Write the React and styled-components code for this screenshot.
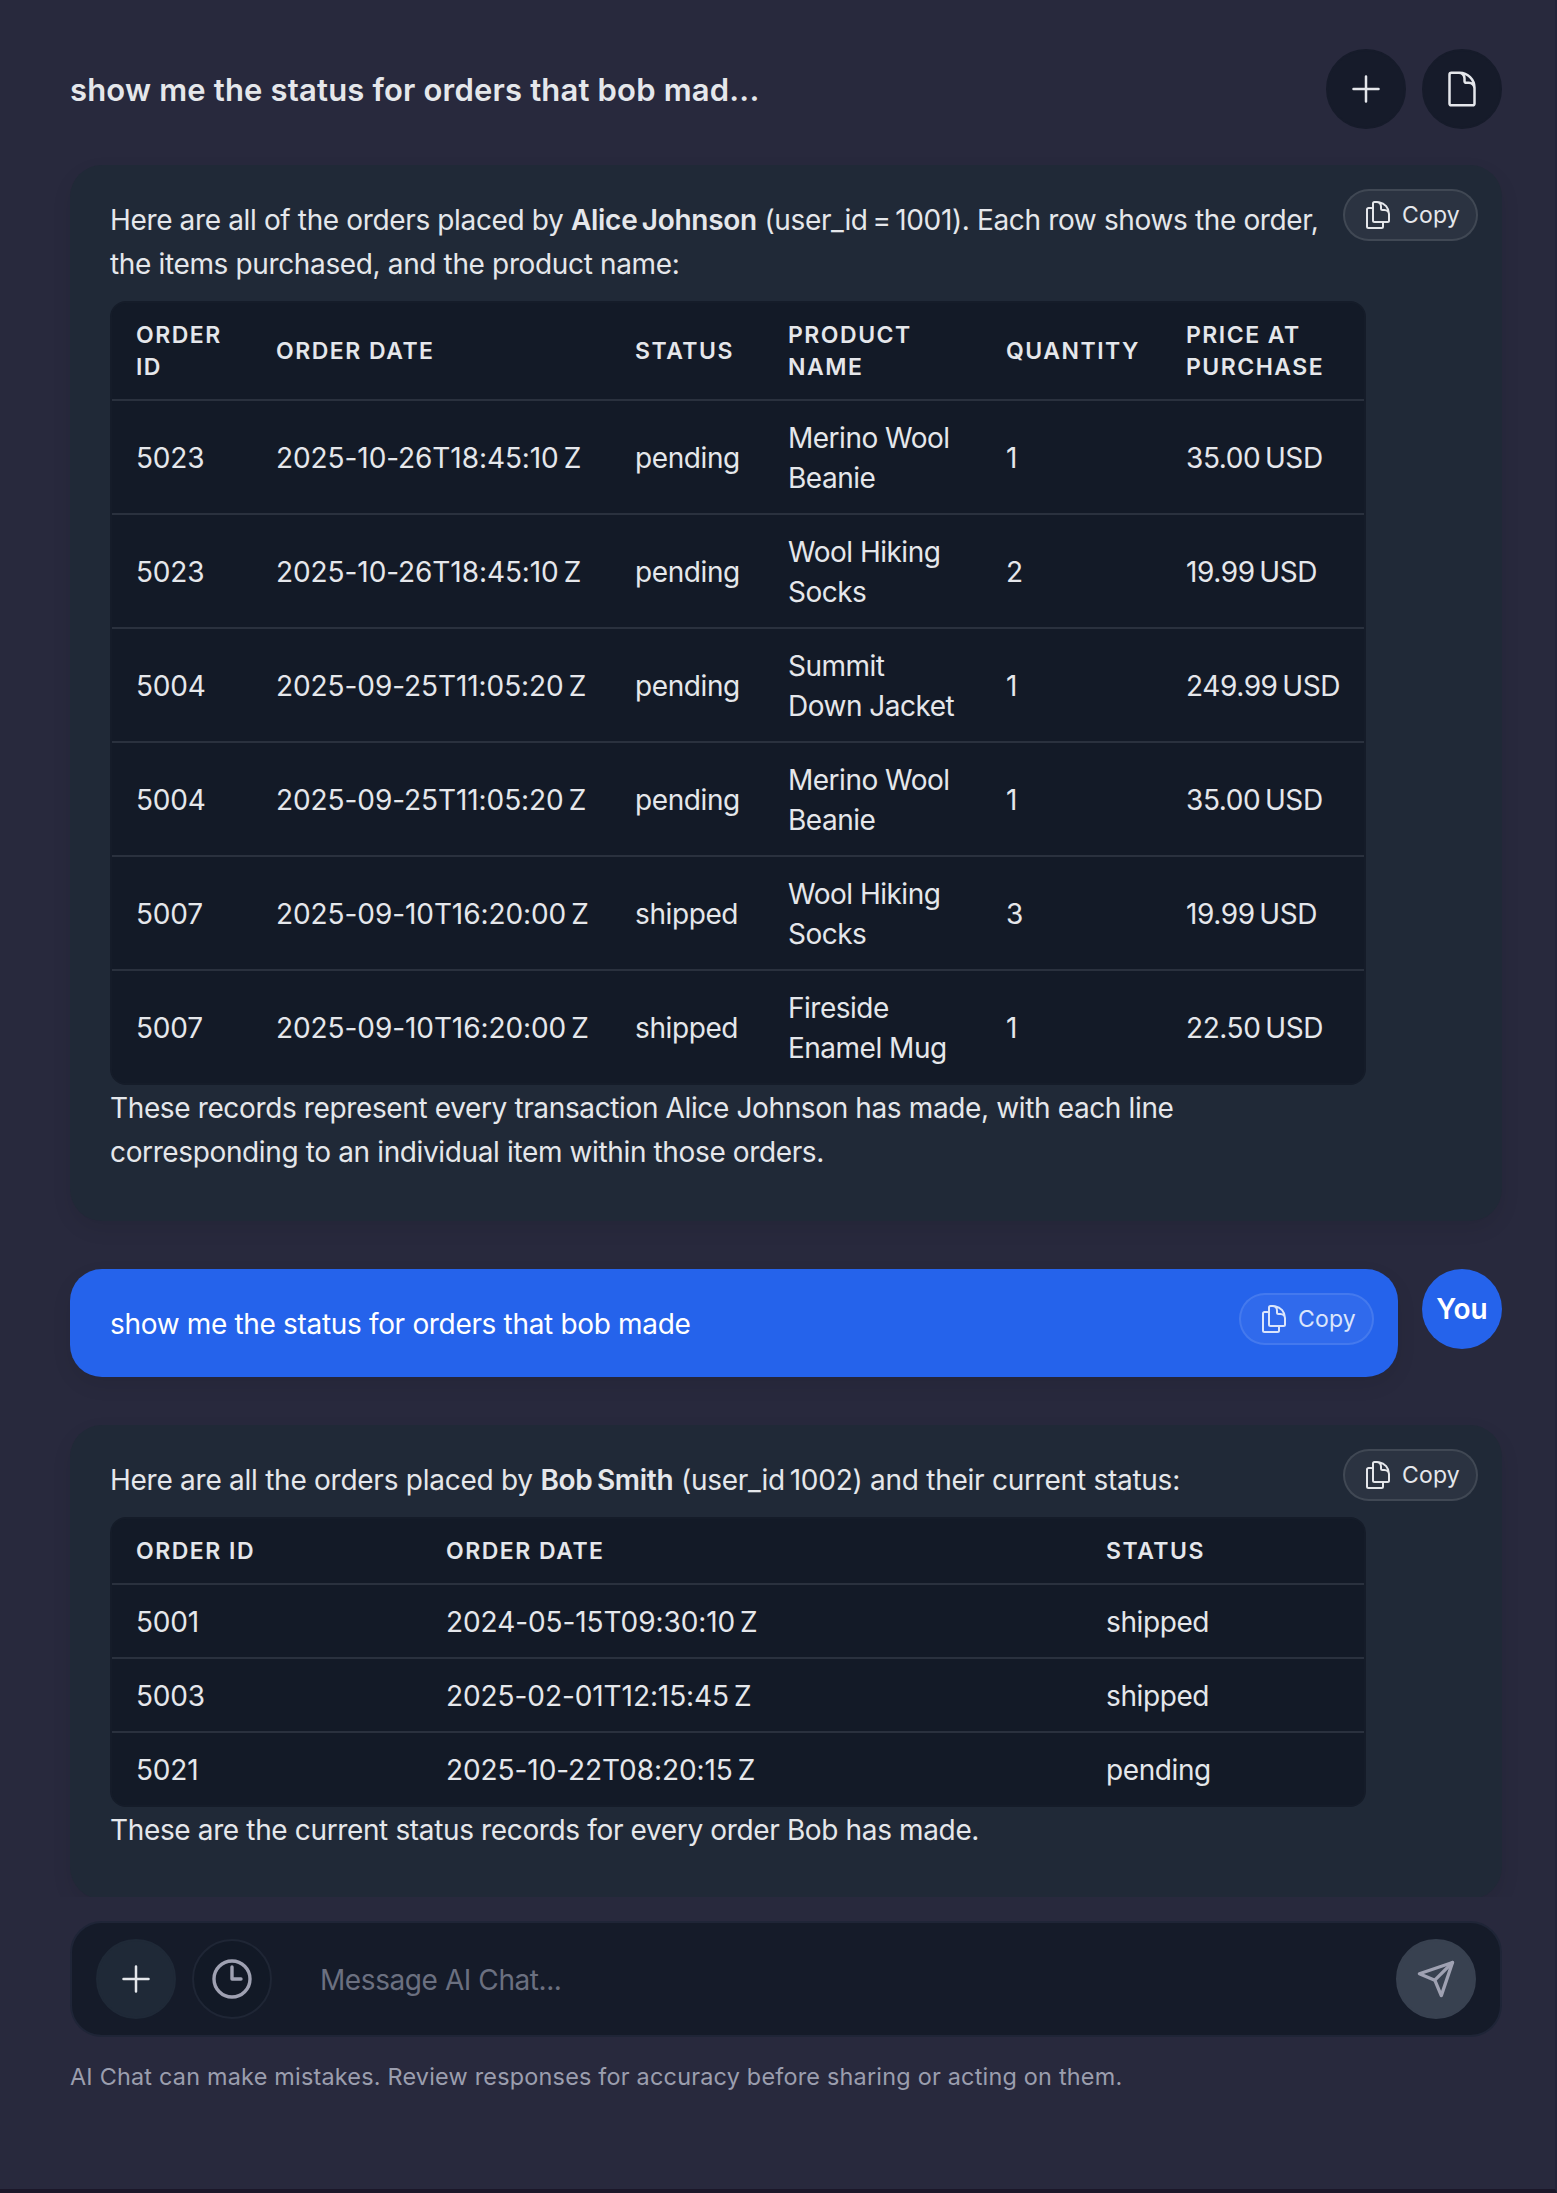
import styled, { createGlobalStyle } from 'styled-components';
import {
  HiOutlineClock,
  HiOutlineDocument,
  HiOutlineDocumentDuplicate,
  HiOutlinePlus,
} from 'react-icons/hi2';

const GlobalStyle = createGlobalStyle`
  * {
    box-sizing: border-box;
  }

  body {
    margin: 0;
    background-color: #28293d;
    color: #e5e7eb;
    font-family: Inter, 'Liberation Sans', sans-serif;
    font-size: 28px;
  }
`;

const Page = styled.div`
  display: flex;
  flex-direction: column;
  height: 2193px;
  padding: 49px 55px 0 70px;
  border-right: 2px solid #22243a;
  border-bottom: 4px solid #1b1729;
  overflow: hidden;
`;

const Header = styled.header`
  display: flex;
  align-items: center;
  justify-content: space-between;
  height: 80px;
  margin-right: -2px;
`;

const Title = styled.h1`
  margin: 0;
  font-size: 31px;
  font-weight: 600;
  letter-spacing: 0.18px;
`;

const HeaderActions = styled.div`
  display: flex;
  gap: 16px;
`;

const RoundButton = styled.button`
  display: flex;
  align-items: center;
  justify-content: center;
  flex-shrink: 0;
  width: 80px;
  height: 80px;
  padding: 0;
  border: 2px solid ${({ $border, $bg }) => $border || $bg};
  border-radius: 50%;
  background-color: ${({ $bg }) => $bg};
  color: ${({ $color }) => $color || '#e5e7eb'};
`;

const Messages = styled.main`
  display: flex;
  flex-direction: column;
  gap: 48px;
  height: 1768px;
  margin: 0 -55px 0 -70px;
  padding: 36px 55px 0 70px;
  overflow: hidden;
`;

const MessageRow = styled.div`
  display: flex;
  align-items: flex-start;
  gap: 24px;
  margin-right: -2px;
`;

const Bubble = styled.div`
  position: relative;
  flex: 1;
  padding: 33px 136px 31px 40px;
  border-radius: 32px;
  background-color: ${({ $user }) => ($user ? '#2563eb' : '#202937')};
  color: ${({ $user }) => ($user ? '#ffffff' : '#e5e7eb')};
  box-shadow: 0 8px 20px rgba(0, 0, 0, 0.08);
`;

const Text = styled.p`
  margin: 0;
  line-height: 44px;
  letter-spacing: ${({ $spacing }) => $spacing || -0.33}px;
  white-space: nowrap;

  strong {
    font-weight: 600;
    letter-spacing: -0.28px;
  }
`;

const CopyButton = styled.button`
  position: absolute;
  top: 24px;
  right: 24px;
  display: flex;
  align-items: center;
  gap: 8px;
  width: 135px;
  height: 52px;
  padding: 0 0 0 17px;
  border: 2px solid rgba(255, 255, 255, 0.1);
  border-radius: 26px;
  background-color: rgba(255, 255, 255, 0.05);
  color: ${({ $user }) => ($user ? '#dbe5fb' : '#e5e7eb')};
  font-family: inherit;
  font-size: 23px;
  letter-spacing: 0.2px;
`;

const TableWrap = styled.div`
  margin: 15px 0 17px;
  border: 2px solid #151c29;
  border-radius: 16px;
  background-color: #131a27;
  overflow: hidden;

  & + ${Text} {
    margin: -16px 0 16px;
  }
`;

const Table = styled.table`
  width: 100%;
  border-collapse: separate;
  border-spacing: 0;
  table-layout: fixed;
`;

const HeadCell = styled.th`
  width: ${({ $width }) => $width}px;
  padding: 16px 0 16px 24px;
  border-bottom: 2px solid #2a313e;
  font-size: 23px;
  font-weight: 600;
  line-height: 32px;
  letter-spacing: 1.5px;
  text-align: left;
  text-transform: uppercase;
  white-space: pre-line;
`;

const Cell = styled.td`
  padding: 17px 0 15px 24px;
  border-bottom: 2px solid #2a313e;
  line-height: 40px;
  letter-spacing: ${({ $spacing }) => $spacing || -0.4}px;
  white-space: pre-line;

  tr:last-child > & {
    border-bottom: none;
  }
`;

const Avatar = styled.div`
  display: flex;
  align-items: center;
  justify-content: center;
  width: 80px;
  height: 80px;
  border-radius: 50%;
  background-color: #2563eb;
  color: #ffffff;
  font-weight: 600;
`;

const Composer = styled.div`
  display: flex;
  align-items: center;
  gap: 16px;
  height: 116px;
  margin: 24px -2px 0 0;
  padding: 0 24px;
  border: 2px solid #1f2537;
  border-radius: 32px;
  background-color: #151b29;
`;

const Input = styled.input`
  flex: 1;
  padding: 1px 0 0 32px;
  border: none;
  outline: none;
  background: transparent;
  color: #e5e7eb;
  font-family: inherit;
  font-size: 28px;
  letter-spacing: -0.42px;

  &::placeholder {
    color: #6b7080;
  }
`;

const Disclaimer = styled.p`
  margin: 24px 0 0;
  color: #9b9eae;
  font-size: 23.4px;
  line-height: 32px;
  letter-spacing: 0.22px;
`;

const aliceColumns = [
  { label: 'Order\nID', width: 140, spacing: -0.2 },
  { label: 'Order Date', width: 359, spacing: -0.08 },
  { label: 'Status', width: 153 },
  { label: 'Product\nName', width: 218, spacing: -0.5 },
  { label: 'Quantity', width: 180 },
  { label: 'Price at\nPurchase', width: 202 },
];

const aliceOrders = [
  ['5023', '2025-10-26T18:45:10\u202fZ', 'pending', 'Merino Wool\nBeanie', '1', '35.00\u202fUSD'],
  ['5023', '2025-10-26T18:45:10\u202fZ', 'pending', 'Wool Hiking\nSocks', '2', '19.99\u202fUSD'],
  ['5004', '2025-09-25T11:05:20\u202fZ', 'pending', 'Summit\nDown Jacket', '1', '249.99\u202fUSD'],
  ['5004', '2025-09-25T11:05:20\u202fZ', 'pending', 'Merino Wool\nBeanie', '1', '35.00\u202fUSD'],
  ['5007', '2025-09-10T16:20:00\u202fZ', 'shipped', 'Wool Hiking\nSocks', '3', '19.99\u202fUSD'],
  ['5007', '2025-09-10T16:20:00\u202fZ', 'shipped', 'Fireside\nEnamel Mug', '1', '22.50\u202fUSD'],
];

const bobColumns = [
  { label: 'Order ID', width: 310, spacing: -0.2 },
  { label: 'Order Date', width: 660, spacing: -0.08 },
  { label: 'Status', width: 282 },
];

const bobOrders = [
  ['5001', '2024-05-15T09:30:10\u202fZ', 'shipped'],
  ['5003', '2025-02-01T12:15:45\u202fZ', 'shipped'],
  ['5021', '2025-10-22T08:20:15\u202fZ', 'pending'],
];

const SendIcon = () => (
  <svg
    width="40"
    height="40"
    viewBox="0 0 40 40"
    fill="none"
    stroke="currentColor"
    strokeWidth="3.3"
    strokeLinecap="round"
    strokeLinejoin="round"
  >
    <path d="M36.5 3.5 3.4 14.7 18.8 21.2 25.3 36.6Z" />
    <path d="M36.5 3.5 18.8 21.2" />
  </svg>
);

const Copy = ({ user }) => (
  <CopyButton $user={user}>
    <HiOutlineDocumentDuplicate size={32} />
    Copy
  </CopyButton>
);

const OrdersTable = ({ columns, rows }) => (
  <TableWrap>
    <Table>
      <thead>
        <tr>
          {columns.map(({ label, width }) => (
            <HeadCell key={label} $width={width}>
              {label}
            </HeadCell>
          ))}
        </tr>
      </thead>
      <tbody>
        {rows.map((row, i) => (
          <tr key={i}>
            {row.map((value, j) => (
              <Cell key={j} $spacing={columns[j].spacing}>
                {value}
              </Cell>
            ))}
          </tr>
        ))}
      </tbody>
    </Table>
  </TableWrap>
);

const App = () => {
  return (
    <>
      <GlobalStyle />
      <Page>
        <Header>
          <Title>show me the status for orders that bob mad...</Title>
          <HeaderActions>
            <RoundButton $bg="#161b2a">
              <HiOutlinePlus size={40} />
            </RoundButton>
            <RoundButton $bg="#161b2a">
              <HiOutlineDocument size={40} />
            </RoundButton>
          </HeaderActions>
        </Header>

        <Messages>
          <MessageRow>
            <Bubble>
              <Copy />
              <Text $spacing={-0.36}>
                Here are all of the orders placed by <strong>Alice{'\u202f'}Johnson</strong>{' '}
                (user_id{'\u202f'}={'\u202f'}1001). Each row shows the order,
                <br />
                the items purchased, and the product name:
              </Text>
              <OrdersTable columns={aliceColumns} rows={aliceOrders} />
              <Text $spacing={-0.37}>
                These records represent every transaction Alice Johnson has made, with each line
                <br />
                corresponding to an individual item within those orders.
              </Text>
            </Bubble>
          </MessageRow>

          <MessageRow>
            <Bubble $user>
              <Copy user />
              <Text>show me the status for orders that bob made</Text>
            </Bubble>
            <Avatar>You</Avatar>
          </MessageRow>

          <MessageRow>
            <Bubble>
              <Copy />
              <Text $spacing={-0.26}>
                Here are all the orders placed by <strong>Bob{'\u202f'}Smith</strong> (user_id
                {'\u202f'}1002) and their current status:
              </Text>
              <OrdersTable columns={bobColumns} rows={bobOrders} />
              <Text $spacing={-0.36}>
                These are the current status records for every order Bob has made.
              </Text>
            </Bubble>
          </MessageRow>
        </Messages>

        <Composer>
          <RoundButton $bg="#1f2937">
            <HiOutlinePlus size={40} />
          </RoundButton>
          <RoundButton $bg="#121926" $border="#1f2635" $color="#9fa1b2">
            <HiOutlineClock size={48} strokeWidth={1.7} />
          </RoundButton>
          <Input placeholder="Message AI Chat..." />
          <RoundButton $bg="#384150" $color="#9fa1b2">
            <SendIcon />
          </RoundButton>
        </Composer>
        <Disclaimer>
          AI Chat can make mistakes. Review responses for accuracy before sharing or acting on them.
        </Disclaimer>
      </Page>
    </>
  );
};

export default App;
